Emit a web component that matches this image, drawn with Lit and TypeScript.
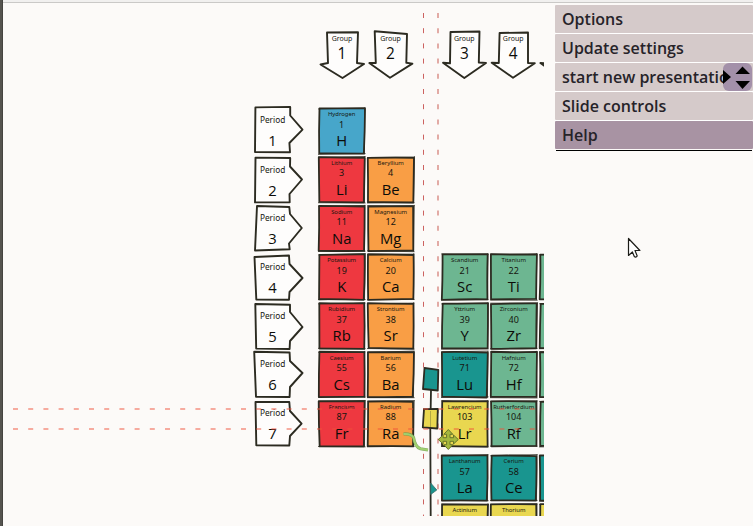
import { LitElement, html, svg, css, nothing } from "lit";
import { customElement } from "lit/decorators.js";

const BLUE = "#47a6ca", RED = "#ee3840", ORANGE = "#f99e45", GREEN = "#6db691", TEAL = "#19958f", YELLOW = "#e9d750";

type Tile = [col: number, row: number, name: string, num: string, sym: string, fill: string];
const COLS = [319.2, 368.2, 442.2, 491.2, 540.2];
const ROWS = [108.8, 157.5, 206.2, 254.6, 303.6, 352.2, 401.4, 455.7, 504.5];

const TILES: Tile[] = [
  [0, 0, "Hydrogen", "1", "H", BLUE],
  [0, 1, "Lithium", "3", "Li", RED],
  [1, 1, "Beryllium", "4", "Be", ORANGE],
  [0, 2, "Sodium", "11", "Na", RED],
  [1, 2, "Magnesium", "12", "Mg", ORANGE],
  [0, 3, "Potassium", "19", "K", RED],
  [1, 3, "Calcium", "20", "Ca", ORANGE],
  [2, 3, "Scandium", "21", "Sc", GREEN],
  [3, 3, "Titanium", "22", "Ti", GREEN],
  [4, 3, "", "", "", GREEN],
  [0, 4, "Rubidium", "37", "Rb", RED],
  [1, 4, "Strontium", "38", "Sr", ORANGE],
  [2, 4, "Yttrium", "39", "Y", GREEN],
  [3, 4, "Zirconium", "40", "Zr", GREEN],
  [4, 4, "", "", "", GREEN],
  [0, 5, "Caesium", "55", "Cs", RED],
  [1, 5, "Barium", "56", "Ba", ORANGE],
  [2, 5, "Lutetium", "71", "Lu", TEAL],
  [3, 5, "Hafnium", "72", "Hf", GREEN],
  [4, 5, "", "", "", GREEN],
  [0, 6, "Francium", "87", "Fr", RED],
  [1, 6, "Radium", "88", "Ra", ORANGE],
  [2, 6, "Lawrencium", "103", "Lr", YELLOW],
  [3, 6, "Rutherfordium", "104", "Rf", GREEN],
  [4, 6, "", "", "", GREEN],
  [2, 7, "Lanthanum", "57", "La", TEAL],
  [3, 7, "Cerium", "58", "Ce", TEAL],
  [4, 7, "", "", "", TEAL],
  [2, 8, "Actinium", "", "", YELLOW],
  [3, 8, "Thorium", "", "", YELLOW],
  [4, 8, "", "", "", YELLOW],
];

const GROUPS: [string, number, string][] = [
  ["1", 342, "327,32.5 358,32.3 357,63 364,64 342.5,78 320.5,64.5 328,63"],
  ["2", 390.5, "374.7,31.3 407,34 406.3,62.8 412.4,63.6 390,77.7 369.3,63 375.8,63"],
  ["3", 464.3, "450.5,32 479.5,31.5 478.8,62.5 486,63 464.3,78 443,62.7 450,63.3"],
  ["4", 513.2, "499.6,33 528,32.5 528,63 534.8,63.3 513,77.7 491.7,62.8 498.8,63"],
  ["", 562, "548,33 577,33 577,63 585,63 562,78 540.4,63 547.5,63.3"],
];

const PERIODS: [string, number, number, string][] = [
  ["1", 123.2, 145.7, "255.4,107.4 290.2,106.9 290.2,115.5 302.5,129.6 289.4,143 290,152.3 255,152"],
  ["2", 173, 195.7, "255.5,157.6 290.2,158 290,166.5 302,179.5 289.5,194 289.7,202.2 255,202.4"],
  ["3", 221, 244, "257,206 289.3,207 290,214 301.8,228 289,243.5 289.7,249.3 255,250.5"],
  ["4", 270, 293, "254.5,257 289,255.5 289.5,264 302.5,278 289.5,292 289,299.8 256.3,299.5"],
  ["5", 319, 341.6, "255.3,304 290,304.7 290,312 302.5,327 290,341 289.6,349 256.2,348.6"],
  ["6", 367, 390, "254.2,351.8 289.6,352.5 290,361 302.5,373 290,387 289.6,397 256,396.8"],
  ["7", 416, 438.7, "255.5,401.9 289.3,402 290,411 301.6,423.6 290,436 289.3,445.5 256.3,445.3"],
];

/** Repeatable small offset that gives the outlines their hand-drawn wobble. */
const wob = (n: number) => {
  const s = Math.sin(n * 91.7 + 3.1) * 4371.3;
  return (s - Math.floor(s) - 0.5) * 1.1;
};

const label = (cls: string, x: number, y: number, text: string) =>
  text ? svg`<text class=${cls} x=${x} y=${y}>${text}</text>` : nothing;

const tile = ([c, r, name, num, sym, fill]: Tile) => {
  const x = COLS[c], y = ROWS[r], k = c * 37 + r * 11;
  const w = (i: number) => wob(k + i);
  const d = `M${x + w(0)},${y + w(1)} Q${x + 23},${y + w(2)} ${x + 45.3 + w(3)},${y + w(4)} Q${x + 45.3 + w(5)},${y + 22} ${x + 45 + w(6)},${y + 44.8 + w(7)} Q${x + 22},${y + 44.8 + w(8)} ${x + w(9)},${y + 44.8 + w(10)} Q${x + w(11)},${y + 22} ${x + w(0)},${y + w(1)}Z`;
  const cx = x + 22.5;
  return svg`
    <path d=${d} fill=${fill} class="ink tile"/>
    <path d=${`M${x - 0.8},${y + 45 + w(3)} L${x + 46},${y + 45.2 + w(2)} M${x + 45.8 + w(1)},${y - 0.9} L${x + 45.3},${y + 45} M${x - 0.6},${y - 0.2 + w(5)} L${x + 46},${y - 0.6 + w(6)}`} class="ink thin"/>
    ${label("name", cx, y + 7.4, name)}
    ${label("num", cx, y + 18.9, num)}
    ${label("sym", cx, y + 37.4, sym)}`;
};

@customElement("slide-canvas")
class SlideCanvas extends LitElement {
  static styles = css`
    :host { display: block; width: 544px; height: 516px; overflow: hidden; }
    svg { display: block; }
    text { font-family: "Noto Sans", "Open Sans", sans-serif; text-anchor: middle; fill: #16160f; }
    .ink { stroke: #2c2b21; stroke-linejoin: round; stroke-linecap: round; }
    .tile { stroke-width: 1.8; }
    .thin { fill: none; stroke-width: 0.8; }
    .shape { fill: #fefdfc; stroke-width: 1.9; stroke-linejoin: round; }
    .name { font-size: 5.9px; }
    .num { font-size: 9px; }
    .sym { font-size: 14.8px; font-family: "Open Sans", "Noto Sans", sans-serif; fill: #0c0c08; }
    .group { font-size: 7px; }
    .group-num { font-size: 15.4px; font-family: "Open Sans", "Noto Sans", sans-serif; fill: #0c0c08; }
    .period { font-size: 8.3px; }
    .period-num { font-size: 14.8px; font-family: "Open Sans", "Noto Sans", sans-serif; fill: #0c0c08; }
    .guide { fill: none; stroke-dasharray: 5 10.2; stroke-width: 1; }
    .v1 { stroke: #cc6260; }
    .v2 { stroke: #dfa29c; stroke-width: 1.8; }
    .h { stroke: #f0523c; stroke-width: 1.4; opacity: 0.62; }
    .wire { fill: none; stroke-width: 1.8; }
    .stem { fill: none; stroke: #6e9d4c; stroke-width: 3.2; opacity: 0.85; }
    .stem-core { fill: none; stroke: #9fd070; stroke-width: 2; }
    .move { fill: #a4b83e; stroke: #65752a; stroke-width: 1; stroke-linejoin: round; }
  `;
  render() {
    return html`<svg width="544" height="516" viewBox="0 0 544 516">
      ${GROUPS.map(([n, x, pts]) => svg`
        <polygon points=${pts} class="ink shape"/>
        ${label("group", x, 41, n && "Group")}
        ${label("group-num", x, 59.3, n)}`)}
      ${PERIODS.map(([n, y1, y2, pts]) => svg`
        <polygon points=${pts} class="ink shape"/>
        ${label("period", 272.6, y1, "Period")}
        ${label("period-num", 272.4, y2, n)}`)}
      ${TILES.map(tile)}
      <path d="M423.5,13V516" class="guide v1"/>
      <path d="M438,13V516" class="guide v2"/>
      <path d="M431,390L430.3,430L430.7,516" class="ink wire"/>
      <path d="M424.5,368L438.3,369.8L437.8,390.5L423,389Z" fill=${TEAL} class="ink tile"/>
      <path d="M424,409.2L437.8,409L437.3,428.5L422.8,427.3Z" fill=${YELLOW} class="ink tile"/>
      <path d="M430.5,411V427" fill="none" stroke="#a49a40" stroke-width="0.8"/>
      <path d="M430.7,483L436.8,490L430.7,494.5Z" fill=${TEAL} stroke="#3b6d67" stroke-width="0.8"/>
      <path d="M13,409H544" class="guide h"/>
      <path d="M13,429H544" class="guide h"/>
      <path d="M403.5,434Q411,433.5 413.5,437.5Q415,447 420.5,448.8L428,450" class="stem"/>
      <path d="M403.5,434Q411,433.5 413.5,437.5Q415,447 420.5,448.8L428,450" class="stem-core"/>
      <path d="M448.3,429.5L452.8,434.3H450V437.7H453.5V435L458.3,439.5L453.5,444V441.3H450V444.7H452.8L448.3,449.5L443.8,444.7H446.6V441.3H443.1V444L438.3,439.5L443.1,435V437.7H446.6V434.3H443.8Z" class="move"/>
    </svg>`;
  }
}

@customElement("slide-menu")
class SlideMenu extends LitElement {
  static styles = css`
    :host { display: block; width: 198px; padding-top: 5px; font: 600 16px/28px "Open Sans", "Noto Sans", sans-serif; color: #262329; }
    .list { display: flex; flex-direction: column; gap: 1px; background: #fff; }
    .item { position: relative; height: 28px; padding-left: 7px; background: #d5caca; border-radius: 1px; white-space: nowrap; overflow: hidden; }
    .active { background: #a893a3; }
    .label { display: block; }
    .stepper { position: absolute; right: 1px; top: 0; display: block; }
    .rule { height: 1px; margin: 1px 1px 0; background: #000; }
  `;
  render() {
    return html`<div class="list">
        <div class="item"><span class="label">Options</span></div>
        <div class="item"><span class="label">Update settings</span></div>
        <div class="item"><span class="label">start new presentatio</span>
          <svg class="stepper" width="29" height="28" viewBox="0 0 29 28">
            <rect width="29" height="28" rx="6" fill="#a390a9"/>
            <path d="M0,7L8,14L0,21Z M12.5,11L19.5,3.5L27,11Z M12.5,18L19.5,26L27,18Z"/>
          </svg>
        </div>
        <div class="item"><span class="label">Slide controls</span></div>
        <div class="item active"><span class="label">Help</span></div>
      </div>
      <div class="rule"></div>`;
  }
}

@customElement("app-root")
class AppRoot extends LitElement {
  static styles = css`
    :host { display: block; position: relative; width: 753px; height: 526px; overflow: hidden; background: #fcfaf8; }
    .stage { display: flex; justify-content: space-between; width: 753px; height: 526px; }
    .topbar { position: absolute; left: 0; top: 0; width: 753px; height: 2px; background: #f1f0ef; border-bottom: 1px solid #cac9c7; }
    .edge { position: absolute; left: 0; top: 0; width: 2px; height: 526px; background: #55544f; border-right: 1px solid #454440; }
    .pointer { position: absolute; left: 627px; top: 237px; }
  `;
  render() {
    return html`
      <div class="stage"><slide-canvas></slide-canvas><slide-menu></slide-menu></div>
      <div class="topbar"></div>
      <div class="edge"></div>
      <svg class="pointer" width="14" height="22" viewBox="0 0 14 22">
        <path d="M1.5,1.5V18.5L5.4,15L7.3,19.5Q8.8,21 10.2,19L8,13.5H12.9Z" fill="#fff" stroke="#1c1c18" stroke-width="1.2" stroke-linejoin="round"/>
      </svg>`;
  }
}
